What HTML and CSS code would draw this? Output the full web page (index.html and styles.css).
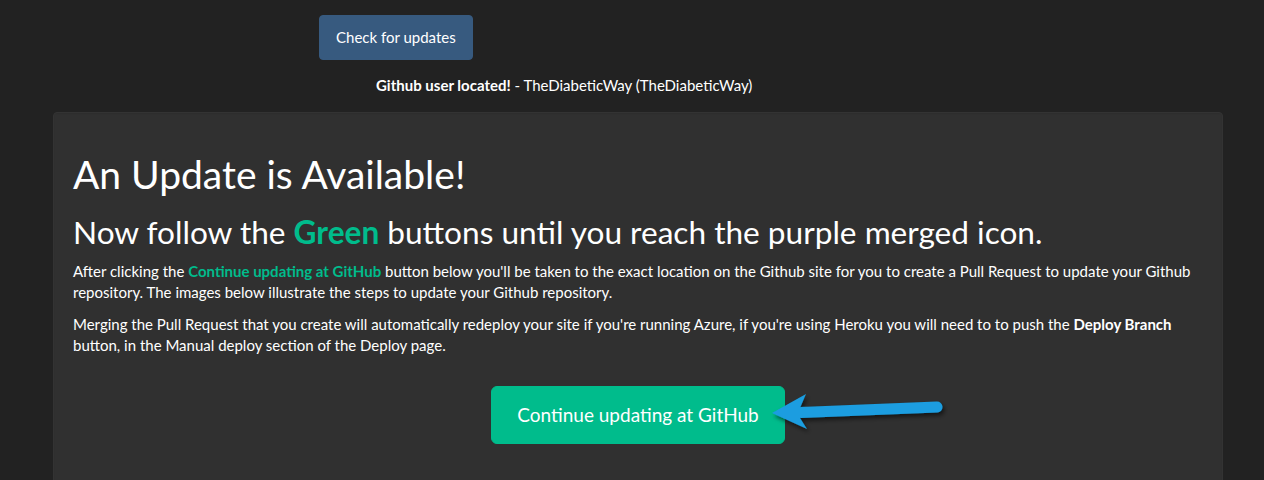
FILE: index.html
```html
<!DOCTYPE html>
<html>
<head>
<meta charset="utf-8">
<link rel="stylesheet" href="styles.css">
</head>
<body>
<div class="top">
  <button class="btn btn-primary">Check for updates</button>
  <div class="located"><strong>Github user located!</strong> - TheDiabeticWay (TheDiabeticWay)</div>
</div>
<div class="well">
  <h1>An Update is Available!</h1>
  <h2>Now follow the <strong class="green">Green</strong> buttons until you reach the purple merged icon.</h2>
  <p>After clicking the <strong class="green">Continue updating at GitHub</strong> button below you'll be taken to the exact location on the Github site for you to create a Pull Request to update your Github repository. The images below illustrate the steps to update your Github repository.</p>
  <p>Merging the Pull Request that you create will automatically redeploy your site if you're running Azure, if you're using Heroku you will need to to push the <strong>Deploy Branch</strong> button, in the Manual deploy section of the Deploy page.</p>
  <div class="cta">
    <a class="btn btn-success btn-lg">Continue updating at GitHub</a>
    <svg class="arrow" width="185" height="45" viewBox="0 0 185 45">
      <defs>
        <filter id="sh" x="-20%" y="-50%" width="140%" height="200%">
          <feDropShadow dx="2" dy="3" stdDeviation="2" flood-color="#000" flood-opacity="0.55"/>
        </filter>
      </defs>
      <g filter="url(#sh)" fill="#1a9de0" stroke="none">
        <line x1="36" y1="22.5" x2="172" y2="17" stroke="#1a9de0" stroke-width="11" stroke-linecap="round"/>
        <polygon points="7,23 41,4 35,18 35,28 42,39"/>
      </g>
    </svg>
  </div>
</div>
</body>
</html>
```

FILE: styles.css
```css
html, body {
  margin: 0;
  padding: 0;
}
body {
  background: #222222;
  color: #ffffff;
  font-family: Lato, "Open Sans", "Liberation Sans", sans-serif;
  font-size: 15px;
  line-height: 1.428571;
  height: 480px;
  overflow: hidden;
}
.top {
  padding-top: 15px;
}
.btn {
  display: inline-block;
  font-family: inherit;
  border: 1px solid transparent;
  border-radius: 4px;
  color: #fff;
  cursor: pointer;
  text-align: center;
}
.btn-primary {
  background: #375a7f;
  border-color: #375a7f;
  margin-left: 319px;
  font-size: 15px;
  line-height: 21px;
  padding: 11px 16px;
}
.located {
  margin-left: 376px;
  margin-top: 15px;
}
.located strong {
  font-weight: 700;
}
.well {
  margin: 16px 0 0 53px;
  width: 1130px;
  padding: 19px 19px 80px;
  background: #303030;
  border: 1px solid #333;
  border-radius: 4px;
  box-shadow: inset 0 1px 1px rgba(0,0,0,0.05);
}
h1 {
  font-size: 39px;
  font-weight: 400;
  line-height: 1.1;
  margin: 21px 0 10.5px;
}
h2 {
  font-size: 31.6px;
  font-weight: 400;
  line-height: 1.1;
  margin: 19px 0 10.5px;
}
.green {
  color: #00bc8c;
  font-weight: 700;
}
p {
  margin: 0 0 10.5px;
}
p strong {
  font-weight: 700;
}
.cta {
  position: relative;
  text-align: center;
  padding-top: 19px;
}
.btn-success {
  background: #00bc8c;
  border-color: #00bc8c;
  font-size: 19px;
  line-height: 26px;
  padding: 15px 25px;
  border-radius: 6px;
}
.arrow {
  position: absolute;
  left: 692px;
  top: 23px;
}
```
